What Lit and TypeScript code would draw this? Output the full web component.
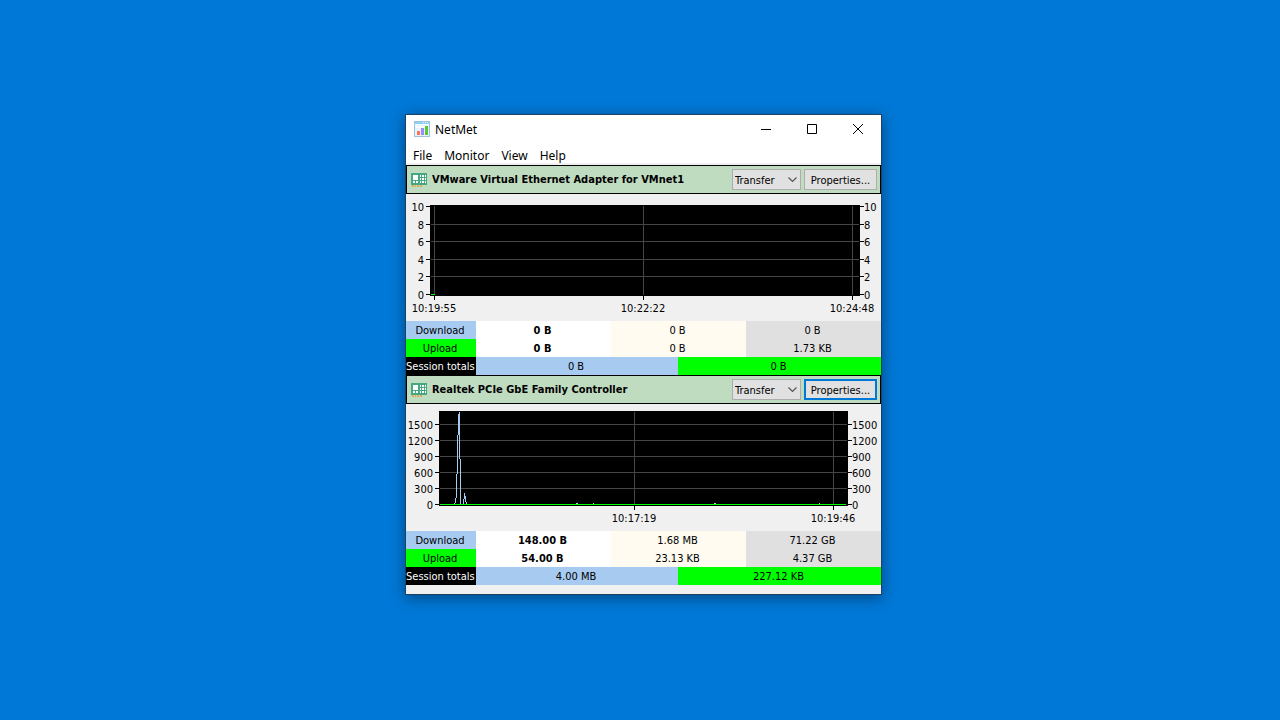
import { LitElement, html, svg, css } from "lit";
import { customElement, property } from "lit/decorators.js";
import { classMap } from "lit/directives/class-map.js";

interface Tick {
  at: number;
  label: string;
}

interface ChartSpec {
  left: number;
  right: number;
  top: number;
  bottom: number;
  rows: Tick[];
  columns: Tick[];
  download: string;
  upload: string;
}

interface Adapter {
  name: string;
  focused: boolean;
  chart: ChartSpec;
  download: [string, string, string];
  upload: [string, string, string];
  session: [string, string];
}

const adapters: Adapter[] = [
  {
    name: "VMware Virtual Ethernet Adapter for VMnet1",
    focused: false,
    chart: {
      left: 24,
      right: 454,
      top: 11,
      bottom: 102,
      rows: [
        { at: 12, label: "10" },
        { at: 30, label: "8" },
        { at: 47, label: "6" },
        { at: 65, label: "4" },
        { at: 82, label: "2" },
        { at: 100, label: "0" },
      ],
      columns: [
        { at: 28, label: "10:19:55" },
        { at: 237, label: "10:22:22" },
        { at: 446, label: "10:24:48" },
      ],
      download: "",
      upload: "M25 100h4v1h-4z",
    },
    download: ["0 B", "0 B", "0 B"],
    upload: ["0 B", "0 B", "1.73 KB"],
    session: ["0 B", "0 B"],
  },
  {
    name: "Realtek PCIe GbE Family Controller",
    focused: true,
    chart: {
      left: 33,
      right: 442,
      top: 7,
      bottom: 102,
      rows: [
        { at: 20, label: "1500" },
        { at: 36, label: "1200" },
        { at: 52, label: "900" },
        { at: 68, label: "600" },
        { at: 84, label: "300" },
        { at: 100, label: "0" },
      ],
      columns: [
        { at: 228, label: "10:17:19" },
        { at: 427, label: "10:19:46" },
      ],
      download:
        "M48 99h1v1h-1zM49 94h1v5h-1zM50 70h1v24h-1zM51 31h1v39h-1zM52 10h1v21h-1zM53 8h1v47h-1zM54 55h1v45h-1z" +
        "M57 95h1v5h-1zM58 89h1v6h-1zM59 92h1v6h-1zM60 98h1v2h-1z" +
        "M170 99h2v1h-2zM187 99h1v1h-1zM308 99h2v1h-2zM413 99h1v1h-1z",
      upload: "M34 100h406v1h-406z",
    },
    download: ["148.00 B", "1.68 MB", "71.22 GB"],
    upload: ["54.00 B", "23.13 KB", "4.37 GB"],
    session: ["4.00 MB", "227.12 KB"],
  },
];

@customElement("traffic-chart")
class TrafficChart extends LitElement {
  @property({ attribute: false }) spec!: ChartSpec;

  static styles = css`
    :host {
      display: block;
      background: #f0f0f0;
    }
    .chart {
      display: block;
      width: 100%;
      font-family: "DejaVu Sans Condensed", "DejaVu Sans", sans-serif;
      font-size: 11px;
    }
    .plot, .tick { fill: #000; }
    .grid { fill: #464646; }
    .download { fill: #a6caf0; }
    .upload { fill: #0f0; }
    .before { text-anchor: end; }
    .below { text-anchor: middle; }
  `;

  render() {
    const { left, right, top, bottom, rows, columns, download, upload } = this.spec;
    return html`
      <svg class="chart" viewBox="0 0 475 127" role="img" aria-label="Transfer history">
        <g shape-rendering="crispEdges">
          <rect class="plot" x=${left} y=${top} width=${right - left} height=${bottom - top}></rect>
          ${rows.slice(0, -1).filter((r) => r.at > top + 1).map(
            (r) => svg`<rect class="grid" x=${left + 1} y=${r.at} width=${right - left - 2} height="1"></rect>`,
          )}
          ${columns.map(
            (c) => svg`<rect class="grid" x=${c.at} y=${top + 1} width="1" height=${bottom - top - 2}></rect>
              <rect class="tick" x=${c.at} y=${bottom} width="1" height="4"></rect>`,
          )}
          ${rows.map(
            (r) => svg`<rect class="tick" x=${left - 4} y=${r.at} width="4" height="1"></rect>
              <rect class="tick" x=${right} y=${r.at} width="4" height="1"></rect>`,
          )}
          <path class="upload" d=${upload}></path>
          <path class="download" d=${download}></path>
        </g>
        ${rows.map(
          (r) => svg`<text class="before" x=${left - 6} y=${r.at + 5}>${r.label}</text>
            <text x=${right + 4} y=${r.at + 5}>${r.label}</text>`,
        )}
        ${columns.map((c) => svg`<text class="below" x=${c.at} y="118">${c.label}</text>`)}
      </svg>
    `;
  }
}

@customElement("adapter-panel")
class AdapterPanel extends LitElement {
  @property({ attribute: false }) adapter!: Adapter;

  static styles = css`
    :host {
      display: block;
      font: 11px/16px "DejaVu Sans Condensed", "DejaVu Sans", sans-serif;
      color: #000;
    }
    .header {
      display: flex;
      align-items: center;
      box-sizing: border-box;
      height: 29px;
      padding: 0 3px 0 4px;
      border: 1px solid #000;
      background: #c0dcc0;
    }
    .card {
      flex: none;
      align-self: flex-start;
      margin: 7px 5px 0 0;
    }
    .name {
      flex: 1;
      min-width: 0;
      margin: 0;
      font-size: 11px;
      font-weight: bold;
      white-space: nowrap;
      overflow: hidden;
    }
    .picker {
      display: grid;
      align-items: center;
      margin-right: 3px;
    }
    .mode, .chevron { grid-area: 1 / 1; }
    .chevron { justify-self: end; margin-right: 4px; pointer-events: none; }
    .mode, .properties {
      box-sizing: border-box;
      height: 21px;
      margin: 0;
      padding: 2px 2px 0;
      border: 1px solid #adadad;
      border-radius: 0;
      background: #e1e1e1;
      color: #000;
      font: inherit;
      outline: none;
    }
    .mode { appearance: none; width: 69px; }
    .properties { width: 73px; padding: 2px 0 0; white-space: nowrap; }
    .focused { border: 2px solid #0078d7; }
    .totals {
      width: 100%;
      table-layout: fixed;
      border-collapse: collapse;
      text-align: center;
    }
    .label { width: 70px; }
    .wide { width: 135px; }
    .half { width: 67px; }
    .rest { width: 68px; }
    .totals th, .totals td {
      padding: 2px 2px 0 0;
      font-weight: normal;
      white-space: nowrap;
    }
    .totals .download { background: #a6caf0; }
    .totals .upload { background: #0f0; }
    .totals .session { background: #000; color: #fff; }
    .totals .now { background: #fff; font-weight: bold; }
    .totals .today { background: #fffbf0; }
    .totals .overall { background: #e0e0e0; }
  `;

  private rates(kind: string, label: string, values: [string, string, string]) {
    return html`<tr>
      <th class=${kind} scope="row">${label}</th>
      <td class="now">${values[0]}</td>
      <td class="today" colspan="2">${values[1]}</td>
      <td class="overall">${values[2]}</td>
    </tr>`;
  }

  render() {
    const a = this.adapter;
    return html`
      <header class="header">
        <svg class="card" width="16" height="14" viewBox="0 0 16 14" shape-rendering="crispEdges" aria-hidden="true">
          <path fill="#45a880" d="M0 0h16v12H0z" />
          <path fill="#fff" d="M2 2h5v5H2zM2 8h2v2H2zM5 8h2v2H5zM9 2h1v2H9zM11 2h2v2h-2zM14 2h1v2h-1zM9 5h1v2H9zM11 5h2v2h-2zM14 5h1v2h-1zM9 8h1v2H9zM11 8h2v2h-2zM14 8h1v2h-1z" />
          <path fill="#e0a857" d="M1 12h2v2H1zM4 12h1v2H4zM6 12h2v2H6zM9 12h2v2H9z" />
        </svg>
        <h2 class="name">${a.name}</h2>
        <div class="picker">
          <select class="mode" aria-label="Display mode">
            <option>Transfer</option>
          </select>
          <svg class="chevron" width="9" height="7" viewBox="0 0 9 7" aria-hidden="true">
            <path d="M.5 1.5l4 4 4-4" fill="none" stroke="#555" stroke-width="1.2" />
          </svg>
        </div>
        <button class=${classMap({ properties: true, focused: a.focused })}>Properties...</button>
      </header>
      <traffic-chart .spec=${a.chart}></traffic-chart>
      <table class="totals">
        <colgroup>
          <col class="label" /><col class="wide" /><col class="half" /><col class="rest" /><col class="wide" />
        </colgroup>
        <tbody>
          ${this.rates("download", "Download", a.download)}
          ${this.rates("upload", "Upload", a.upload)}
          <tr>
            <th class="session" scope="row">Session totals</th>
            <td class="download" colspan="2">${a.session[0]}</td>
            <td class="upload" colspan="2">${a.session[1]}</td>
          </tr>
        </tbody>
      </table>
    `;
  }
}

@customElement("app-root")
class AppRoot extends LitElement {
  static styles = css`
    :host {
      display: block;
      position: relative;
      min-height: 100vh;
      background: #0078d7;
      overflow: hidden;
    }
    .window {
      position: absolute;
      left: 405px;
      top: 114px;
      box-sizing: border-box;
      width: 477px;
      padding-bottom: 9px;
      border: 1px solid #1b4264;
      background: #f0f0f0;
      box-shadow: 0 3px 14px rgba(0, 0, 0, 0.4);
      font: 12px/18px "Noto Sans", "Open Sans", sans-serif;
      color: #000;
    }
    .titlebar {
      display: flex;
      align-items: center;
      height: 30px;
      padding-left: 8px;
      background: #fff;
    }
    .logo {
      flex: none;
      align-self: flex-start;
      margin: 6px 5px 0 0;
    }
    .title { flex: 1; margin: 0; font-size: 12px; font-weight: normal; }
    .control {
      display: grid;
      place-items: center;
      width: 46px;
      height: 28px;
      padding: 0;
      border: 0;
      background: none;
      align-self: flex-start;
    }
    .menu {
      display: flex;
      height: 18px;
      padding-left: 1px;
      border-bottom: 2px solid #f0f0f0;
      background: #fff;
    }
    .item {
      padding: 2px 6px 0;
      border: 0;
      background: none;
      color: #000;
      font: inherit;
    }
  `;

  render() {
    return html`
      <main class="window">
        <div class="titlebar">
          <svg class="logo" width="16" height="16" viewBox="0 0 16 16" shape-rendering="crispEdges" aria-hidden="true">
            <path fill="#9cc3e2" d="M0 0h16v16H0z" />
            <path fill="#e8f3fb" d="M1 4h14v11H1z" />
            <path fill="#8fd0ee" d="M1 1h14v2H1z" />
            <path fill="#e6f7ff" d="M9 1h1v1H9zM11 1h1v1h-1zM13 1h1v1h-1z" />
            <path fill="#f9fcff" d="M1 3h14v1H1zM2 5h9v2H2z" />
            <path fill="#ff7350" d="M3 10h3v4H3z" />
            <path fill="#9a8cff" d="M7 7h3v7H7z" />
            <path fill="#5cc82c" d="M11 5h3v9h-3z" />
          </svg>
          <h1 class="title">NetMet</h1>
          <button class="control" aria-label="Minimize">
            <svg width="10" height="10" viewBox="0 0 10 10"><path d="M0 5h10v1H0z" /></svg>
          </button>
          <button class="control" aria-label="Maximize">
            <svg width="10" height="10" viewBox="0 0 10 10"><path d="M.5.5h9v9h-9z" fill="none" stroke="#000" /></svg>
          </button>
          <button class="control" aria-label="Close">
            <svg width="10" height="10" viewBox="0 0 10 10"><path d="M0 0l10 10M10 0L0 10" stroke="#000" /></svg>
          </button>
        </div>
        <nav class="menu">
          ${["File", "Monitor", "View", "Help"].map((m) => html`<button class="item">${m}</button>`)}
        </nav>
        ${adapters.map((a) => html`<adapter-panel .adapter=${a}></adapter-panel>`)}
      </main>
    `;
  }
}
